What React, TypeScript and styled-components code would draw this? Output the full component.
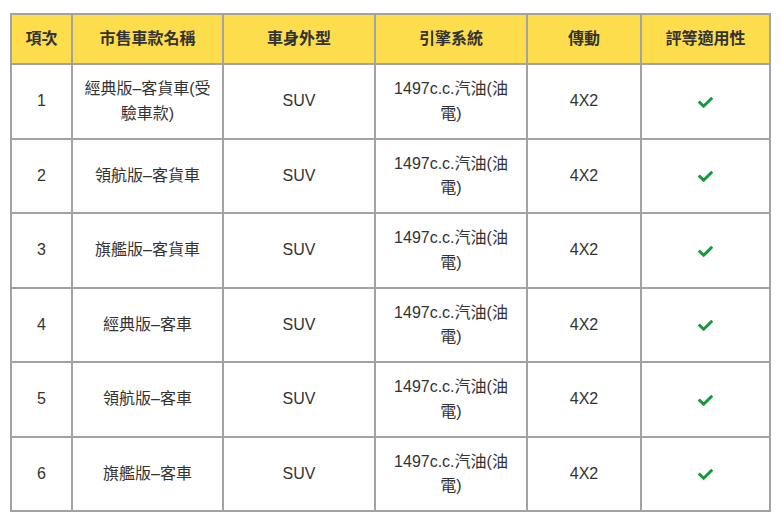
import React from "react";
import styled, { createGlobalStyle } from "styled-components";
import { FaCheck } from "react-icons/fa";

const Global = createGlobalStyle`
  html, body { margin: 0; padding: 0; background: #fff; }
  body { font-family: "Liberation Sans", "Noto Sans CJK TC", sans-serif; }
`;

const Page = styled.div`
  padding: 13px 11px 13px 10px;
`;

const Table = styled.table`
  width: 759px;
  border-collapse: collapse;
  table-layout: fixed;
  border: 2px solid #a2a2a2;
  font-size: 16px;
  line-height: 24.25px;
  color: #333;
`;

const Th = styled.th`
  background: #fddd4b;
  border: 2px solid #a2a2a2;
  padding: 12px 8px;
  font-weight: 700;
  color: #333;
  text-align: center;
`;

const Td = styled.td`
  border: 2px solid #a2a2a2;
  padding: 12px 8px;
  text-align: center;
  vertical-align: middle;
  color: #333;
`;

const Check = styled(FaCheck)`
  color: #14993c;
  width: 15px;
  height: 15px;
  display: inline-block;
  vertical-align: middle;
`;

const cols = [61, 151, 152, 152, 114, 129];
const headers = ["項次", "市售車款名稱", "車身外型", "引擎系統", "傳動", "評等適用性"];
const rows = [
  "經典版–客貨車(受驗車款)",
  "領航版–客貨車",
  "旗艦版–客貨車",
  "經典版–客車",
  "領航版–客車",
  "旗艦版–客車",
];

export default function App() {
  return (
    <Page>
      <Global />
      <Table>
        <colgroup>
          {cols.map((w, i) => (
            <col key={i} style={{ width: w }} />
          ))}
        </colgroup>
        <thead>
          <tr>
            {headers.map((h) => (
              <Th key={h}>{h}</Th>
            ))}
          </tr>
        </thead>
        <tbody>
          {rows.map((name, i) => (
            <tr key={i}>
              <Td>{i + 1}</Td>
              <Td>{name}</Td>
              <Td>SUV</Td>
              <Td>1497c.c.汽油(油電)</Td>
              <Td>4X2</Td>
              <Td>
                <Check />
              </Td>
            </tr>
          ))}
        </tbody>
      </Table>
    </Page>
  );
}
